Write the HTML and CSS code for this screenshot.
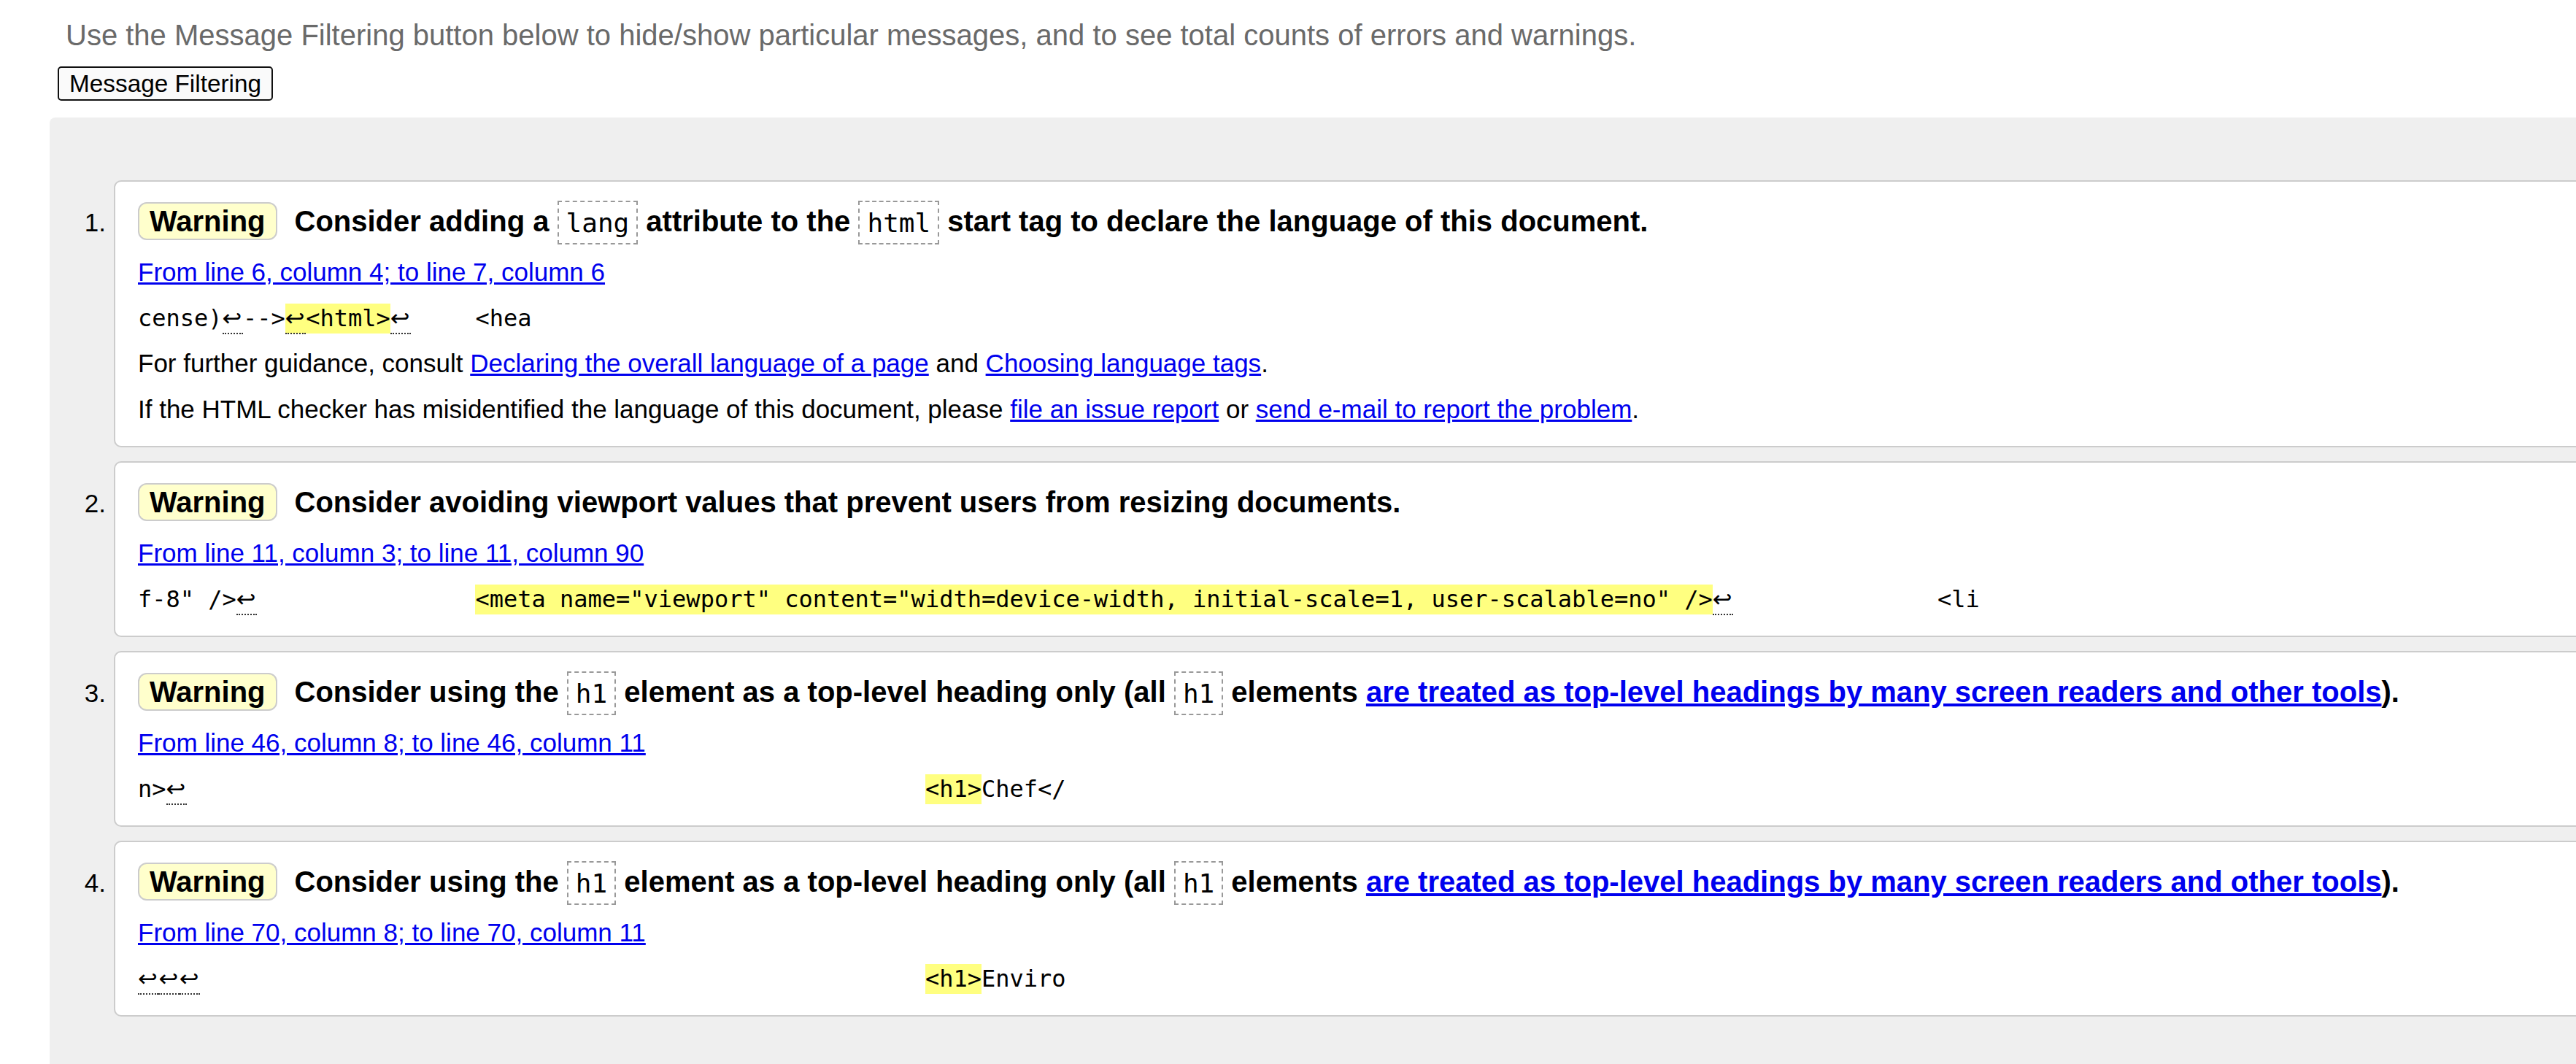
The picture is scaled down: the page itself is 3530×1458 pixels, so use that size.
FILE: index.html
```html
<!DOCTYPE html>
<html>
<head>
<meta charset="utf-8">
<title>Nu Html Checker results</title>
<link rel="stylesheet" href="styles.css">
</head>
<body>
<p class="intro">Use the Message Filtering button below to hide/show particular messages, and to see total counts of errors and warnings.</p>
<button class="filter-btn" type="button">Message Filtering</button>
<div class="results">
  <div class="item">
    <span class="num">1.</span>
    <div class="card">
      <p class="title"><strong class="badge">Warning</strong><span>Consider adding a <code class="cbox">lang</code> attribute to the <code class="cbox">html</code> start tag to declare the language of this document.</span></p>
      <p class="loc"><a href="#l6c4">From line 6, column 4; to line 7, column 6</a></p>
      <p class="extract"><code>cense)<span class="lf">↩</span>--&gt;<mark><span class="lf">↩</span>&lt;html&gt;</mark><span class="lf">↩</span>&#9;&lt;hea</code></p>
      <p class="note first">For further guidance, consult <a href="#">Declaring the overall language of a page</a> and <a href="#">Choosing language tags</a>.</p>
      <p class="note">If the HTML checker has misidentified the language of this document, please <a href="#">file an issue report</a> or <a href="#">send e-mail to report the problem</a>.</p>
    </div>
  </div>
  <div class="item">
    <span class="num">2.</span>
    <div class="card">
      <p class="title"><strong class="badge">Warning</strong><span>Consider avoiding viewport values that prevent users from resizing documents.</span></p>
      <p class="loc"><a href="#l11c3">From line 11, column 3; to line 11, column 90</a></p>
      <p class="extract"><code>f-8" /&gt;<span class="lf">↩</span>&#9;&#9;<mark>&lt;meta name="viewport" content="width=device-width, initial-scale=1, user-scalable=no" /&gt;</mark><span class="lf">↩</span>&#9;&#9;&lt;li</code></p>
    </div>
  </div>
  <div class="item">
    <span class="num">3.</span>
    <div class="card">
      <p class="title"><strong class="badge">Warning</strong><span>Consider using the <code class="cbox">h1</code> element as a top-level heading only (all <code class="cbox">h1</code> elements <a href="#">are treated as top-level headings by many screen readers and other tools</a>).</span></p>
      <p class="loc"><a href="#l46c8">From line 46, column 8; to line 46, column 11</a></p>
      <p class="extract"><code>n&gt;<span class="lf">↩</span>&#9;&#9;&#9;&#9;&#9;&#9;&#9;<mark>&lt;h1&gt;</mark>Chef&lt;/</code></p>
    </div>
  </div>
  <div class="item">
    <span class="num">4.</span>
    <div class="card">
      <p class="title"><strong class="badge">Warning</strong><span>Consider using the <code class="cbox">h1</code> element as a top-level heading only (all <code class="cbox">h1</code> elements <a href="#">are treated as top-level headings by many screen readers and other tools</a>).</span></p>
      <p class="loc"><a href="#l70c8">From line 70, column 8; to line 70, column 11</a></p>
      <p class="extract"><code><span class="lf">↩</span><span class="lf">↩</span><span class="lf">↩</span>&#9;&#9;&#9;&#9;&#9;&#9;&#9;<mark>&lt;h1&gt;</mark>Enviro</code></p>
    </div>
  </div>
</div>
</body>
</html>
```
FILE: styles.css
```css
html, body {
  margin: 0;
  padding: 0;
  overflow: hidden;
  background: #fff;
}
body {
  font-family: "Liberation Sans", Arial, sans-serif;
  color: #000;
}
.intro {
  margin: 0;
  padding: 25px 0 0 90px;
  font-size: 40px;
  line-height: 46px;
  color: #6a6a6a;
  white-space: nowrap;
}
.filter-btn {
  display: block;
  margin: 20px 0 0 79px;
  height: 47px;
  box-sizing: border-box;
  padding: 0 14px;
  border: 2px solid #111;
  border-radius: 5px;
  background: #fafafa;
  font-family: "Liberation Sans", Arial, sans-serif;
  font-size: 33.33px;
  line-height: 1;
  color: #000;
}
.results {
  margin: 23px -80px 0 68px;
  background: #efefef;
  border-top-left-radius: 8px;
  padding: 86px 0 200px 0;
  display: flex;
  flex-direction: column;
  gap: 19.5px;
}
.item {
  display: flex;
  align-items: baseline;
  gap: 11px;
}
.num {
  width: 77px;
  flex: none;
  text-align: right;
  font-size: 35px;
  line-height: 40px;
}
.card {
  flex: 1;
  min-width: 0;
  background: #fff;
  border: 2px solid #ccc;
  border-radius: 10px;
  padding: 28px 0 30px 31px;
  font-size: 35px;
  line-height: 40px;
}
.title {
  margin: 0;
  font-size: 40px;
  font-weight: bold;
  line-height: 52px;
  white-space: nowrap;
}
.badge {
  display: inline-block;
  line-height: 46px;
  padding: 1px 14px;
  border: 2px solid #ccc;
  border-radius: 12px;
  background: #ffffcc;
  margin-right: 24px;
}
.cbox {
  font-family: "DejaVu Sans Mono", monospace;
  font-size: 36px;
  font-weight: normal;
  line-height: 36px;
  padding: 7.5px 10px;
  border: 2px dashed #999;
}
.loc {
  margin: 23.5px 0 0;
  font-family: "Liberation Sans", Arial, sans-serif;
}
a {
  color: #0000ee;
}
.extract {
  margin: 23px 0 0;
  font-family: "DejaVu Sans Mono", monospace;
  font-size: 32px;
  line-height: 40px;
  white-space: pre;
  tab-size: 8;
}
.extract code {
  font-family: inherit;
  font-size: inherit;
  line-height: inherit;
}
mark {
  background: #ffff80;
  color: inherit;
  padding: 1px 0 2px;
}
.lf {
  display: inline-block;
  width: 28.4px;
  line-height: 40px;
  font-family: "DejaVu Sans", sans-serif;
  border-bottom: 2px dotted #333;
  margin-bottom: -2px;
}
.note {
  margin: 23px 0 0;
  font-family: "Liberation Sans", Arial, sans-serif;
}
.note.first {
  margin-top: 22px;
}
```
